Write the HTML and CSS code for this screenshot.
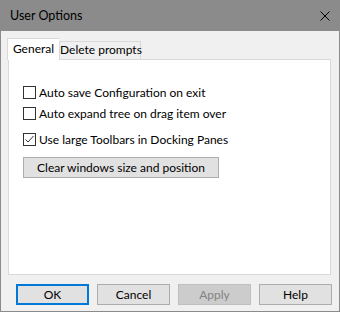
FILE: index.html
```html
<!DOCTYPE html>
<html>
<head>
<title>User Options</title>
<link rel="stylesheet" href="styles.css">
</head>
<body>
	<div class="window">
		<header class="titlebar">
			<span class="title">User Options</span>
			<svg class="close" width="10" height="10" viewBox="0 0 10 10">
				<path d="M0.5 0.5 L9.5 9.5 M9.5 0.5 L0.5 9.5" stroke="#000" stroke-width="1" fill="none"/>
			</svg>
		</header>
		<div class="tabs">
			<div class="tab active">General</div>
			<div class="tab second">Delete prompts</div>
		</div>
		<section class="pane">
			<label class="check"><span class="box"></span>Auto save Configuration on exit</label>
			<label class="check"><span class="box"></span>Auto expand tree on drag item over</label>
			<label class="check checked"><span class="box">
				<svg width="11" height="11" viewBox="0 0 11 11"><path d="M1.5 5.5 L4 8 L9.5 2" stroke="#333" stroke-width="1" fill="none"/></svg>
			</span>Use large Toolbars in Docking Panes</label>
			<button class="btn wide" type="button">Clear windows size and position</button>
		</section>
		<footer class="buttons">
			<button class="btn default" type="button">OK</button>
			<button class="btn" type="button">Cancel</button>
			<button class="btn disabled" type="button">Apply</button>
			<button class="btn" type="button">Help</button>
		</footer>
	</div>
</body>
</html>
```
FILE: styles.css
```css
body{
	margin:0;
	font-family:Lato, "Open Sans", sans-serif;
	font-size:12px;
	color:#000;
}
.window{
	width:340px;
	height:312px;
	box-sizing:border-box;
	background-color:#f0f0f0;
	border:1px solid #8b8b8b;
	border-top:none;
}
.titlebar{
	height:31px;
	margin:0 -1px;
	background-color:#8b8b8b;
	display:flex;
	align-items:center;
	justify-content:space-between;
	padding:0 10px 0 10px;
}
.title{
	font-size:12.5px;
}
.tabs{
	display:flex;
	align-items:flex-end;
	margin-top:7px;
	padding-left:6px;
	height:21px;
}
.tab{
	box-sizing:border-box;
	height:18px;
	border:1px solid #d9d9d9;
	border-bottom:none;
	line-height:16px;
	background-color:#f0f0f0;
	text-align:center;
	white-space:nowrap;
}
.tab.second{
	width:82px;
}
.tab.active{
	height:22px;
	width:52px;
	background-color:#fff;
	line-height:20px;
	border-right:none;
	position:relative;
	margin-bottom:-1px;
	z-index:1;
}
.pane{
	box-sizing:border-box;
	margin:0 8px 0 7px;
	height:216px;
	background-color:#fff;
	border:1px solid #d9d9d9;
	padding:25px 0 0 14px;
	display:flex;
	flex-direction:column;
	align-items:flex-start;
}
.check{
	display:flex;
	align-items:center;
	height:15px;
	margin-bottom:6px;
}
.check:nth-child(2){
	margin-bottom:11px;
}
.box{
	box-sizing:border-box;
	width:13px;
	height:13px;
	border:1px solid #333;
	margin-right:3px;
	display:flex;
	align-items:center;
	justify-content:center;
}
.btn{
	box-sizing:border-box;
	height:21px;
	width:73px;
	font-family:inherit;
	font-size:12px;
	color:#000;
	background-color:#e1e1e1;
	border:1px solid #adadad;
	padding:0;
}
.btn.wide{
	width:196px;
	margin-top:4px;
}
.btn.default{
	border:2px solid #0078d7;
}
.btn.disabled{
	background-color:#cccccc;
	border-color:#bfbfbf;
	color:#838383;
}
.buttons{
	display:flex;
	gap:8px;
	padding:9px 0 0 15px;
}
```
